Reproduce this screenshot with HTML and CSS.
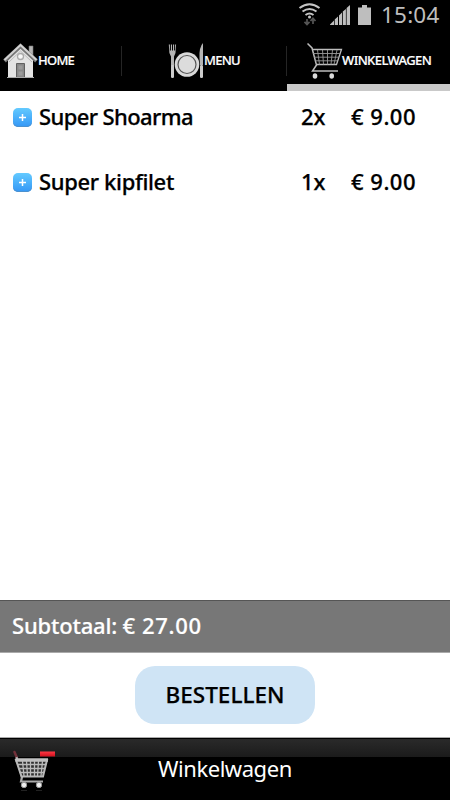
FILE: index.html
```html
<!DOCTYPE html>
<html lang="nl">
<head>
<meta charset="utf-8">
<title>Winkelwagen</title>
<link rel="stylesheet" href="styles.css">
</head>
<body>
<div class="app">
  <div class="status">
    <svg class="wifi" width="24" height="26" viewBox="0 0 24 26" fill="none" stroke="#c4c4c4" stroke-width="2">
      <path d="M1.500 7Q11.500 -.5 21.500 7M4.500 10.500Q11.500 5.500 18.500 10.500M7.500 14Q11.500 11 15.500 14"/>
      <circle cx="11.500" cy="16" r="1.500" fill="#c4c4c4" stroke="none"/>
      <path d="M9 18v5.500M6.500 20.800L9 23.500l2.500-2.700M15 23v-5M12.500 20l2.500-2.700 2.500 2.700" stroke="#555" stroke-width="1.700"/>
    </svg>
    <svg class="signal" width="20" height="20" viewBox="0 0 20 20" fill="#bebebe">
      <path d="M0 20V19.500L4 15.500V20ZM4.700 20V14.500L8 11.500V20ZM9 20V10.500L12 7.500V20ZM12.800 20V6.500L15.900 4V20ZM16.600 20V3L20 0V20Z"/>
    </svg>
    <svg class="battery" width="13" height="20" viewBox="0 0 13 20" fill="#bebebe"><path d="M4 0h5v2.500h4V20H0V2.500h4z"/></svg>
    <span class="clock">15:04</span>
  </div>
  <nav class="tabs">
    <div class="tab home">
      <svg width="36" height="36" viewBox="0 0 36 36">
        <path d="M26 3h4v10l-4-4z" fill="#b5b5b5" stroke="#777" stroke-width=".6"/>
        <path d="M5 17L17.500 5 30 17V34.500H5z" fill="#e4e4e4"/>
        <path d="M6 19L17.500 8 29 19" fill="none" stroke="#bbb"/>
        <path d="M1.500 18L17.500 3 33.500 18" fill="none" stroke="#777" stroke-width="4"/>
        <path d="M1.500 17L17.500 2 33.500 17" fill="none" stroke="#d2d2d2" stroke-width="2"/>
        <circle cx="17.500" cy="13.500" r="3" fill="#f7f7f7" stroke="#aaa" stroke-width="1.300"/>
        <path d="M13.500 34.500V20.500h8v14z" fill="#888" stroke="#606060"/>
        <path d="M15.500 22.500h4v4h-4zm0 6h4v4h-4z" fill="#9b9b9b"/>
        <path d="M4 34.500h27" stroke="#aaa"/>
      </svg><span>HOME</span>
    </div>
    <div class="tab menu">
      <svg width="37" height="36" viewBox="0 0 37 36">
        <path d="M.8 1.500h1.100v6h1V1.500H4v6h1V1.500h1.100v6h1V1.500h1L7.500 10 6 13.500V23H3V13.500L1.400 10z" fill="#b5b5b5"/>
        <rect x="3" y="22" width="3" height="13" rx="1.300" fill="#ccc"/>
        <circle cx="19" cy="21.500" r="12.300" fill="#d9d9d9"/>
        <circle cx="19" cy="21.500" r="9" fill="#dcdcdc" stroke="#555" stroke-width="1.200"/>
        <path d="M35 0Q31 4 31.500 15l.5 7h3z" fill="#b5b5b5"/>
        <rect x="32" y="22" width="3" height="13" rx="1.300" fill="#ccc"/>
      </svg><span>MENU</span>
    </div>
    <div class="tab cart active">
      <svg width="36" height="37" viewBox="0 0 36 37" fill="none" stroke="#bcbcbc">
        <path d="M.5 .5L5 5l4.500 17-4 6H31" stroke-width="1.500"/>
        <path d="M5 6.500H34.500L29.500 21.500H9.500" stroke-width="1.300"/>
        <path d="M6 10.500H33.500M7 14.200H32M8 17.800H30.500M10.500 7l2 14.500M15.500 7l1 14.500M20.500 7v14.500M25.500 7L24 21.500M30 7l-3 14.500" stroke="#999" stroke-width=".9"/>
        <ellipse cx="8" cy="33" rx="2.300" ry="2.800" fill="#ddd" stroke="none"/>
        <ellipse cx="24.700" cy="33" rx="2.300" ry="2.800" fill="#ddd" stroke="none"/>
      </svg><span>WINKELWAGEN</span>
    </div>
  </nav>
  <main class="items">
    <div class="item">
      <span class="plus"><svg width="19" height="19" viewBox="0 0 19 19"><path d="M9.500 6v7M6 9.500h7" stroke="#fff" stroke-width="1.500"/></svg></span>
      <span class="name shoarma">Super Shoarma</span><span class="qty">2x</span><span class="price">€ 9.00</span>
    </div>
    <div class="item">
      <span class="plus"><svg width="19" height="19" viewBox="0 0 19 19"><path d="M9.500 6v7M6 9.500h7" stroke="#fff" stroke-width="1.500"/></svg></span>
      <span class="name kipfilet">Super kipfilet</span><span class="qty">1x</span><span class="price">€ 9.00</span>
    </div>
  </main>
  <div class="subtotal"><span class="label">Subtotaal: </span><span class="amount">€ 27.00</span></div>
  <div class="order"><button class="order-button"><span>BESTELLEN</span></button></div>
  <footer class="footer">
    <svg class="footer-cart" width="44" height="44" viewBox="0 0 44 44" fill="none">
      <defs><linearGradient id="red" x2="0" y2="1"><stop stop-color="#ff3945"/><stop offset="1" stop-color="#cf101d"/></linearGradient></defs>
      <path d="M1.500 2L4 8" stroke="#713039" stroke-width="2.500" stroke-linecap="round"/>
      <path d="M3.500 7l5.500 20-1 4.500H30" stroke="#aaa" stroke-width="2.200"/>
      <path d="M3 10H34L30 26.500H8.500z" fill="#303030" stroke="#b8b8b8" stroke-width="2"/>
      <path d="M2.500 10H35" stroke="#c0c0c0" stroke-width="3.500"/>
      <path d="M5 14.500H33M6 18.500H32M7.500 22.500H31M9.500 11l1.500 15M13.500 11l1 15M17.500 11v15M21.500 11v15M25.500 11l-1 15M29.500 11l-1.500 15" stroke="#bbb" stroke-width="1.300"/>
      <circle cx="11" cy="35" r="2.700" fill="#eee" stroke="#999"/><circle cx="26" cy="35" r="2.700" fill="#eee" stroke="#999"/>
      <path d="M8 40.500h6M23 40.500h6" stroke="#222"/>
      <rect x="27" y="1.500" width="15" height="5" fill="url(#red)"/>
    </svg>
    <span>Winkelwagen</span>
  </footer>
</div>
</body>
</html>
```
FILE: styles.css
```css
* { box-sizing: border-box; }
body { margin: 0; background: #fff; font-family: "Noto Sans", sans-serif; }
.app { width: 450px; height: 800px; display: flex; flex-direction: column; overflow: hidden; }
svg { display: block; flex: none; }
span { white-space: nowrap; }
.status { height: 34px; background: #000; display: flex; align-items: flex-start; padding-left: 298px; flex: none; }
.wifi { margin-top: 1px; }
.signal { margin: 5px 0 0 8px; }
.battery { margin: 5px 0 0 8px; }
.clock { color: #bebebe; font-size: 22.500px; line-height: 30px; margin-left: 10px; letter-spacing: .2px; }
.tabs { height: 57px; background: #000; display: flex; flex: none; color: #fff; font-size: 13px; font-weight: 500; -webkit-text-stroke: .2px currentColor; }
.tab { display: flex; height: 57px; line-height: 18px; background: linear-gradient(#252525, #252525) right 12px / 1px 30px no-repeat; }
.tab svg { margin-top: 9px; }
.tab span { margin: 17px 0 0 -1px; letter-spacing: -.6px; }
.home { width: 122px; padding-left: 3px; }
.home span, .menu span { letter-spacing: -.75px; }
.menu { width: 165px; padding-left: 46px; }
.cart { width: 163px; padding-left: 20px; }
.active { background: none; border-bottom: 7px solid #c9c9c9; }
.items { flex: 1; padding-top: 2px; }
.item { height: 65px; display: grid; grid-template-columns: 26px 262px 50px 1fr; padding-left: 13px; font-size: 22px; line-height: 46px; font-weight: 500; -webkit-text-stroke: .25px currentColor; }
.plus { width: 19px; height: 19px; margin-top: 15px; border-radius: 5px; background: linear-gradient(#63caff, #3497f6); box-shadow: inset 0 -1px #4c91ce; }
.shoarma { letter-spacing: -.6px; }
.kipfilet { letter-spacing: -.35px; }
.price { letter-spacing: .5px; }
.subtotal { height: 53px; flex: none; background: #777; border-top: 1px solid #555; border-bottom: 1px solid #aaa; color: #fff; padding-left: 12px; font-size: 22px; line-height: 48px; font-weight: 500; -webkit-text-stroke: .2px currentColor; }
.label { letter-spacing: -.2px; white-space: pre; }
.amount { letter-spacing: .65px; }
.order { height: 84px; flex: none; display: flex; justify-content: center; padding-top: 13px; }
.order-button { width: 180px; height: 58px; padding: 0; border: 0; border-radius: 20px; background: #cfe4f5; color: #000; font: 500 22.500px/56px "Noto Sans", sans-serif; letter-spacing: 0; -webkit-text-stroke: .25px currentColor; }
.footer { height: 63px; flex: none; display: flex; background: linear-gradient(#2a2a2a, #1b1b1b) 0 1px / 100% 18px no-repeat #000; border-top: 1px solid #aaa; color: #fff; font-size: 22px; line-height: 60px; }
.footer-cart { margin: 12px 0 0 13px; }
.footer span { margin-left: 101px; letter-spacing: -.45px; }
```
